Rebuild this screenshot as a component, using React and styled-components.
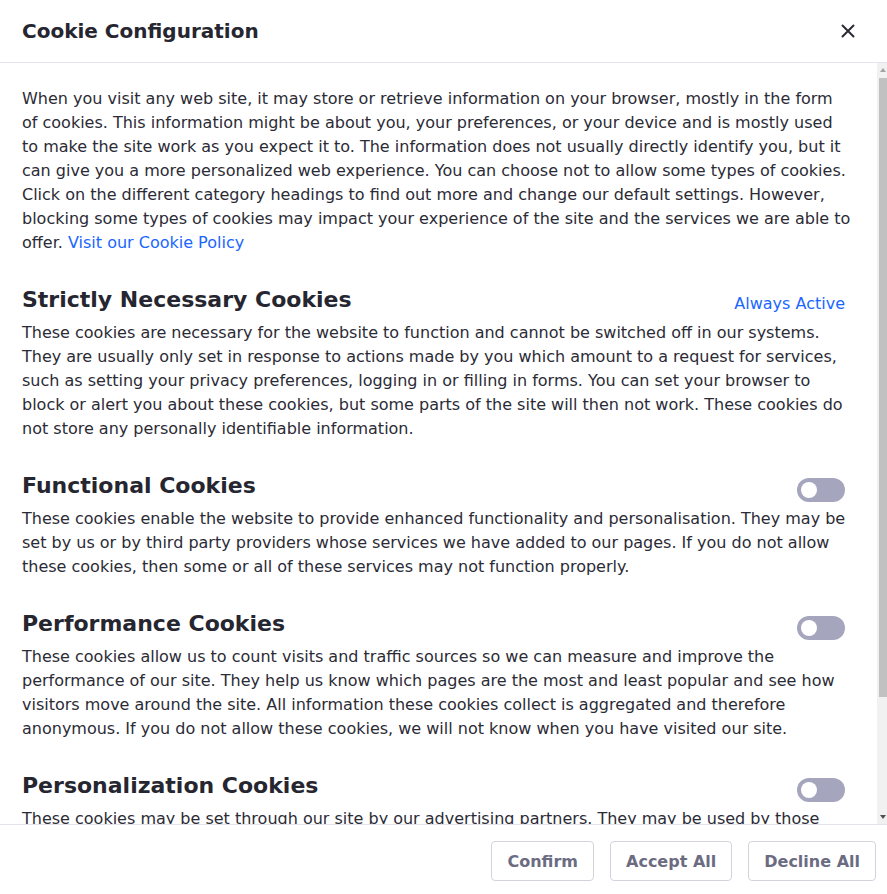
import React, { useState } from "react";
import styled, { createGlobalStyle } from "styled-components";

const GlobalStyle = createGlobalStyle`
  html, body {
    margin: 0;
    padding: 0;
    background: #ffffff;
  }
  body {
    font-family: "DejaVu Sans", Verdana, sans-serif;
    color: #2b2b36;
  }
  * { box-sizing: border-box; }
`;

const sections = [
  {
    title: "Strictly Necessary Cookies",
    always: true,
    text:
      "These cookies are necessary for the website to function and cannot be switched off in our systems. They are usually only set in response to actions made by you which amount to a request for services, such as setting your privacy preferences, logging in or filling in forms. You can set your browser to block or alert you about these cookies, but some parts of the site will then not work. These cookies do not store any personally identifiable information.",
  },
  {
    title: "Functional Cookies",
    text:
      "These cookies enable the website to provide enhanced functionality and personalisation. They may be set by us or by third party providers whose services we have added to our pages. If you do not allow these cookies, then some or all of these services may not function properly.",
  },
  {
    title: "Performance Cookies",
    text:
      "These cookies allow us to count visits and traffic sources so we can measure and improve the performance of our site. They help us know which pages are the most and least popular and see how visitors move around the site. All information these cookies collect is aggregated and therefore anonymous. If you do not allow these cookies, we will not know when you have visited our site.",
  },
  {
    title: "Personalization Cookies",
    text:
      "These cookies may be set through our site by our advertising partners. They may be used by those companies to build a profile of your interests and show you relevant adverts on other sites. They do not store directly personal information, but are based on uniquely identifying your browser and internet device. If you do not allow these cookies, you will experience less targeted advertising.",
  },
];

const App = () => {
  const [on, setOn] = useState({});
  return (
    <>
      <GlobalStyle />
      <Modal>
        <Header>
          <Title>Cookie Configuration</Title>
          <CloseButton aria-label="Close">
            <svg width="16" height="16" viewBox="0 0 16 16">
              <path
                d="M2.5 2.5 L13.5 13.5 M13.5 2.5 L2.5 13.5"
                stroke="#2b2b36"
                strokeWidth="2"
                strokeLinecap="round"
              />
            </svg>
          </CloseButton>
        </Header>
        <Main>
          <Body>
            <Intro>
              When you visit any web site, it may store or retrieve information
              on your browser, mostly in the form of cookies. This information
              might be about you, your preferences, or your device and is mostly
              used to make the site work as you expect it to. The information
              does not usually directly identify you, but it can give you a more
              personalized web experience. You can choose not to allow some
              types of cookies. Click on the different category headings to find
              out more and change our default settings. However, blocking some
              types of cookies may impact your experience of the site and the
              services we are able to offer.{" "}
              <Link href="#">Visit our Cookie Policy</Link>
            </Intro>
            {sections.map((s) => (
              <Section key={s.title}>
                <SectionHead>
                  <SectionTitle>{s.title}</SectionTitle>
                  {s.always ? (
                    <AlwaysActive>Always Active</AlwaysActive>
                  ) : (
                    <Toggle
                      $on={!!on[s.title]}
                      onClick={() => setOn({ ...on, [s.title]: !on[s.title] })}
                    />
                  )}
                </SectionHead>
                <SectionText>{s.text}</SectionText>
              </Section>
            ))}
          </Body>
          <ScrollTrack>
            <ScrollArrow $dir="up" />
            <ScrollThumb />
            <ScrollArrow $dir="down" />
          </ScrollTrack>
        </Main>
        <Footer>
          <FooterButton>Confirm</FooterButton>
          <FooterButton>Accept All</FooterButton>
          <FooterButton>Decline All</FooterButton>
        </Footer>
      </Modal>
    </>
  );
};

export default App;

const Modal = styled.div`
  width: 887px;
  height: 894px;
  display: flex;
  flex-direction: column;
  background: #fff;
`;

const Header = styled.div`
  height: 63px;
  flex: none;
  display: flex;
  align-items: center;
  justify-content: space-between;
  padding: 0 31px 0 22px;
  border-bottom: 1px solid #e4e4ec;
`;

const Title = styled.h1`
  margin: 0;
  font-size: 20px;
  font-weight: 700;
  color: #262630;
`;

const CloseButton = styled.button`
  border: none;
  background: none;
  padding: 0;
  width: 16px;
  height: 16px;
  display: flex;
  cursor: pointer;
`;

const Main = styled.div`
  flex: 1;
  min-height: 0;
  display: flex;
`;

const Body = styled.div`
  flex: 1;
  min-width: 0;
  overflow: hidden;
  padding: 24px 25px 24px 22px;
`;

const ScrollTrack = styled.div`
  width: 10px;
  flex: none;
  display: flex;
  flex-direction: column;
  background: #f1f1f1;
`;

const ScrollArrow = styled.div`
  height: 14px;
  flex: none;
  display: flex;
  align-items: center;
  justify-content: center;
  padding-left: 2px;
  margin-top: ${(p) => (p.$dir === "down" ? "auto" : "0")};
  &::before {
    content: "";
    width: 0;
    height: 0;
    border-left: 3.5px solid transparent;
    border-right: 3.5px solid transparent;
    ${(p) =>
      p.$dir === "up"
        ? "border-bottom: 4px solid #a3a3a3;"
        : "border-top: 4px solid #505050;"}
  }
`;

const ScrollThumb = styled.div`
  height: 619px;
  margin: 1px 0 0 2px;
  background: #c1c1c1;
`;

const Intro = styled.p`
  margin: 0;
  font-size: 16px;
  line-height: 24px;
`;

const Link = styled.a`
  color: #1a66ff;
  text-decoration: none;
`;

const Section = styled.div`
  margin-top: 28px;
`;

const SectionHead = styled.div`
  display: flex;
  align-items: center;
  justify-content: space-between;
  padding-right: 7px;
  margin-bottom: 5px;
`;

const SectionTitle = styled.h2`
  margin: 0;
  font-size: 22px;
  line-height: 33px;
  font-weight: 700;
  color: #262630;
`;

const AlwaysActive = styled.span`
  font-size: 16px;
  color: #1a66ff;
  margin-top: 8px;
`;

const Toggle = styled.button`
  position: relative;
  width: 48px;
  height: 24px;
  margin-top: 8px;
  border: none;
  border-radius: 12px;
  background: ${(p) => (p.$on ? "#1a66ff" : "#a5a6bd")};
  cursor: pointer;
  padding: 0;
  &::after {
    content: "";
    position: absolute;
    top: 4px;
    left: ${(p) => (p.$on ? "28px" : "4px")};
    width: 16px;
    height: 16px;
    border-radius: 50%;
    background: #fff;
  }
`;

const SectionText = styled.p`
  margin: 0;
  font-size: 16px;
  line-height: 24px;
`;

const Footer = styled.div`
  height: 70px;
  flex: none;
  display: flex;
  align-items: center;
  justify-content: flex-end;
  gap: 16px;
  padding: 3px 11px 0;
  border-top: 1px solid #e4e4ec;
`;

const FooterButton = styled.button`
  height: 40px;
  padding: 0 15px;
  font-family: "DejaVu Sans", Verdana, sans-serif;
  font-size: 16px;
  font-weight: 700;
  color: #6b6c82;
  background: #fff;
  border: 1px solid #d3d3dd;
  border-radius: 4px;
  cursor: pointer;
`;
